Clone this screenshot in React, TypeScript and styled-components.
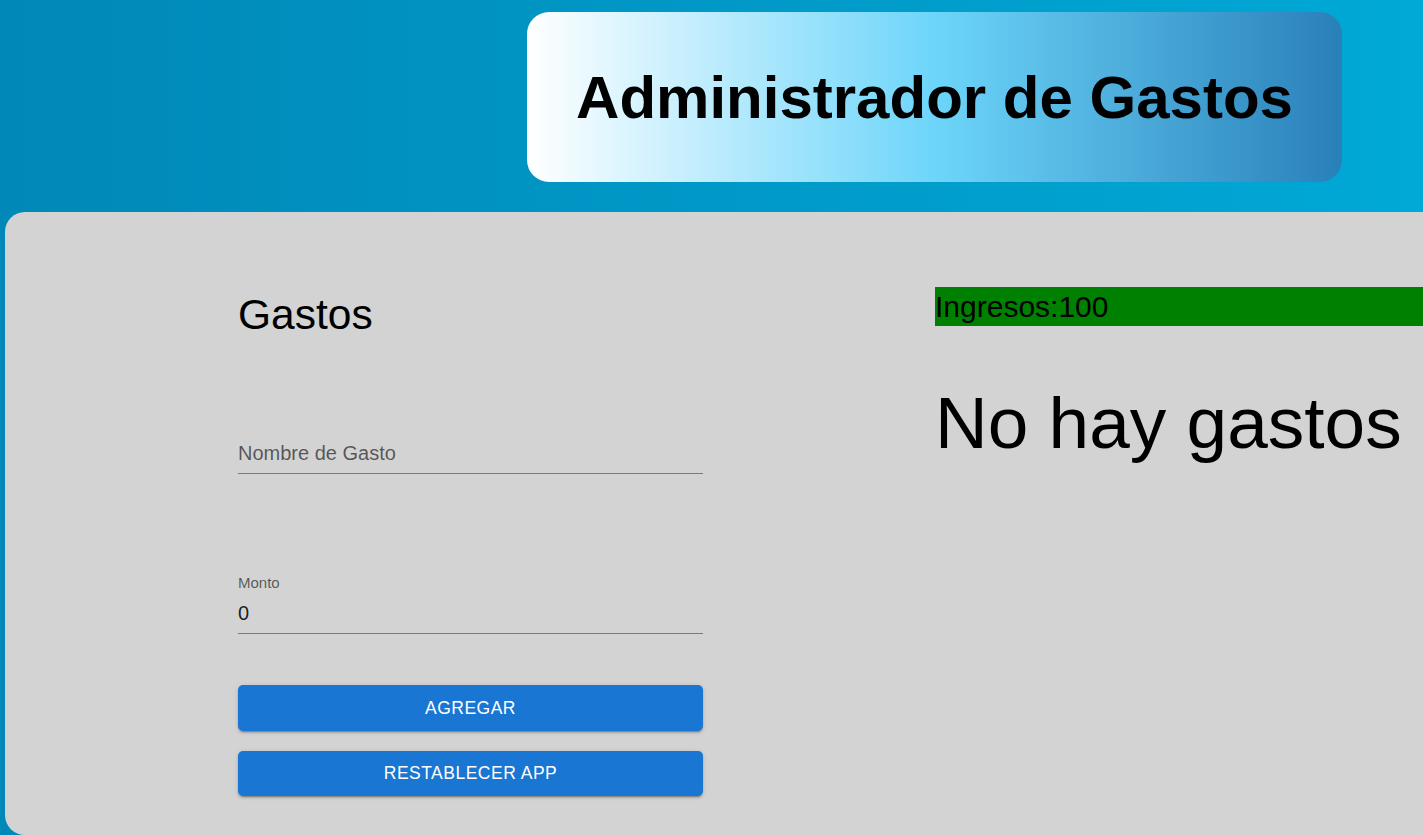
import React from "react";
import styled, { createGlobalStyle } from "styled-components";

const GlobalStyle = createGlobalStyle`
  html, body {
    margin: 0;
    padding: 0;
  }
  body {
    font-family: "Liberation Sans", Arial, sans-serif;
    background: linear-gradient(to right, #0088b8, #00a9d6);
    min-height: 835px;
    overflow: hidden;
  }
  * { box-sizing: border-box; }
`;

const Page = styled.div`
  display: flex;
  flex-direction: column;
  min-height: 835px;
`;

const Header = styled.header`
  display: flex;
  padding: 12px 0 30px 527px;
`;

const TitleCard = styled.div`
  width: 815px;
  height: 170px;
  border-radius: 22px;
  background: linear-gradient(to right, #ffffff, #6dd5fa, #2980b9);
  display: flex;
  align-items: center;
  justify-content: center;
`;

const Title = styled.h1`
  margin: 0;
  font-family: "Liberation Sans", Arial, sans-serif;
  font-size: 60px;
  font-weight: 700;
  color: #000;
  line-height: normal;
`;

const Panel = styled.main`
  margin-left: 5px;
  flex: 1;
  min-height: 623px;
  background: #d3d3d3;
  border-radius: 20px 0 0 20px;
  display: grid;
  grid-template-columns: 465px 1fr;
  column-gap: 232px;
  padding: 75px 0 0 233px;
  align-items: start;
`;

const FormColumn = styled.section`
  display: flex;
  flex-direction: column;
`;

const SectionTitle = styled.h4`
  margin: 2px 0 0;
  font-size: 42.5px;
  font-weight: 400;
  line-height: 1.235;
  color: #000;
`;

const Field = styled.div<{ $gapTop: number }>`
  display: flex;
  flex-direction: column;
  margin-top: ${(p) => p.$gapTop}px;
`;

const LabelRow = styled.label`
  height: 20px;
  font-size: 15px;
  line-height: 18px;
  color: rgba(0, 0, 0, 0.6);
`;

const Input = styled.input`
  width: 100%;
  height: 40px;
  border: none;
  border-bottom: 1px solid rgba(0, 0, 0, 0.42);
  background: transparent;
  padding: 5px 0 6px;
  font-family: "Liberation Sans", Arial, sans-serif;
  font-size: 20px;
  color: rgba(0, 0, 0, 0.87);
  outline: none;
  &::placeholder {
    color: rgba(0, 0, 0, 0.6);
    opacity: 1;
  }
`;

const Buttons = styled.div`
  display: flex;
  flex-direction: column;
  gap: 20px;
  margin-top: 51px;
`;

const Button = styled.button`
  height: 45.5px;
  width: 100%;
  border: none;
  border-radius: 5px;
  background: #1976d2;
  color: #fff;
  font-family: "Liberation Sans", Arial, sans-serif;
  font-size: 17.5px;
  font-weight: 500;
  letter-spacing: 0.02857em;
  text-transform: uppercase;
  box-shadow: 0px 3px 1px -2px rgba(0, 0, 0, 0.2), 0px 2px 2px 0px rgba(0, 0, 0, 0.14),
    0px 1px 5px 0px rgba(0, 0, 0, 0.12);
  cursor: pointer;
`;

const SummaryColumn = styled.section`
  display: flex;
  flex-direction: column;
`;

const IncomeBar = styled.div`
  background: #008000;
  color: #000;
  font-size: 30px;
  line-height: 39px;
  height: 39px;
  white-space: nowrap;
`;

const EmptyMessage = styled.p`
  margin: 55px 0 0;
  font-size: 73px;
  line-height: normal;
  color: #000;
  white-space: nowrap;
`;

export default function App() {
  return (
    <>
      <GlobalStyle />
      <Page>
        <Header>
          <TitleCard>
            <Title>Administrador de Gastos</Title>
          </TitleCard>
        </Header>
        <Panel>
          <FormColumn>
            <SectionTitle>Gastos</SectionTitle>
            <Field $gapTop={73}>
              <LabelRow />
              <Input placeholder="Nombre de Gasto" />
            </Field>
            <Field $gapTop={100}>
              <LabelRow>Monto</LabelRow>
              <Input type="text" defaultValue="0" />
            </Field>
            <Buttons>
              <Button>Agregar</Button>
              <Button>Restablecer App</Button>
            </Buttons>
          </FormColumn>
          <SummaryColumn>
            <IncomeBar>Ingresos:100</IncomeBar>
            <EmptyMessage>No hay gastos</EmptyMessage>
          </SummaryColumn>
        </Panel>
      </Page>
    </>
  );
}
